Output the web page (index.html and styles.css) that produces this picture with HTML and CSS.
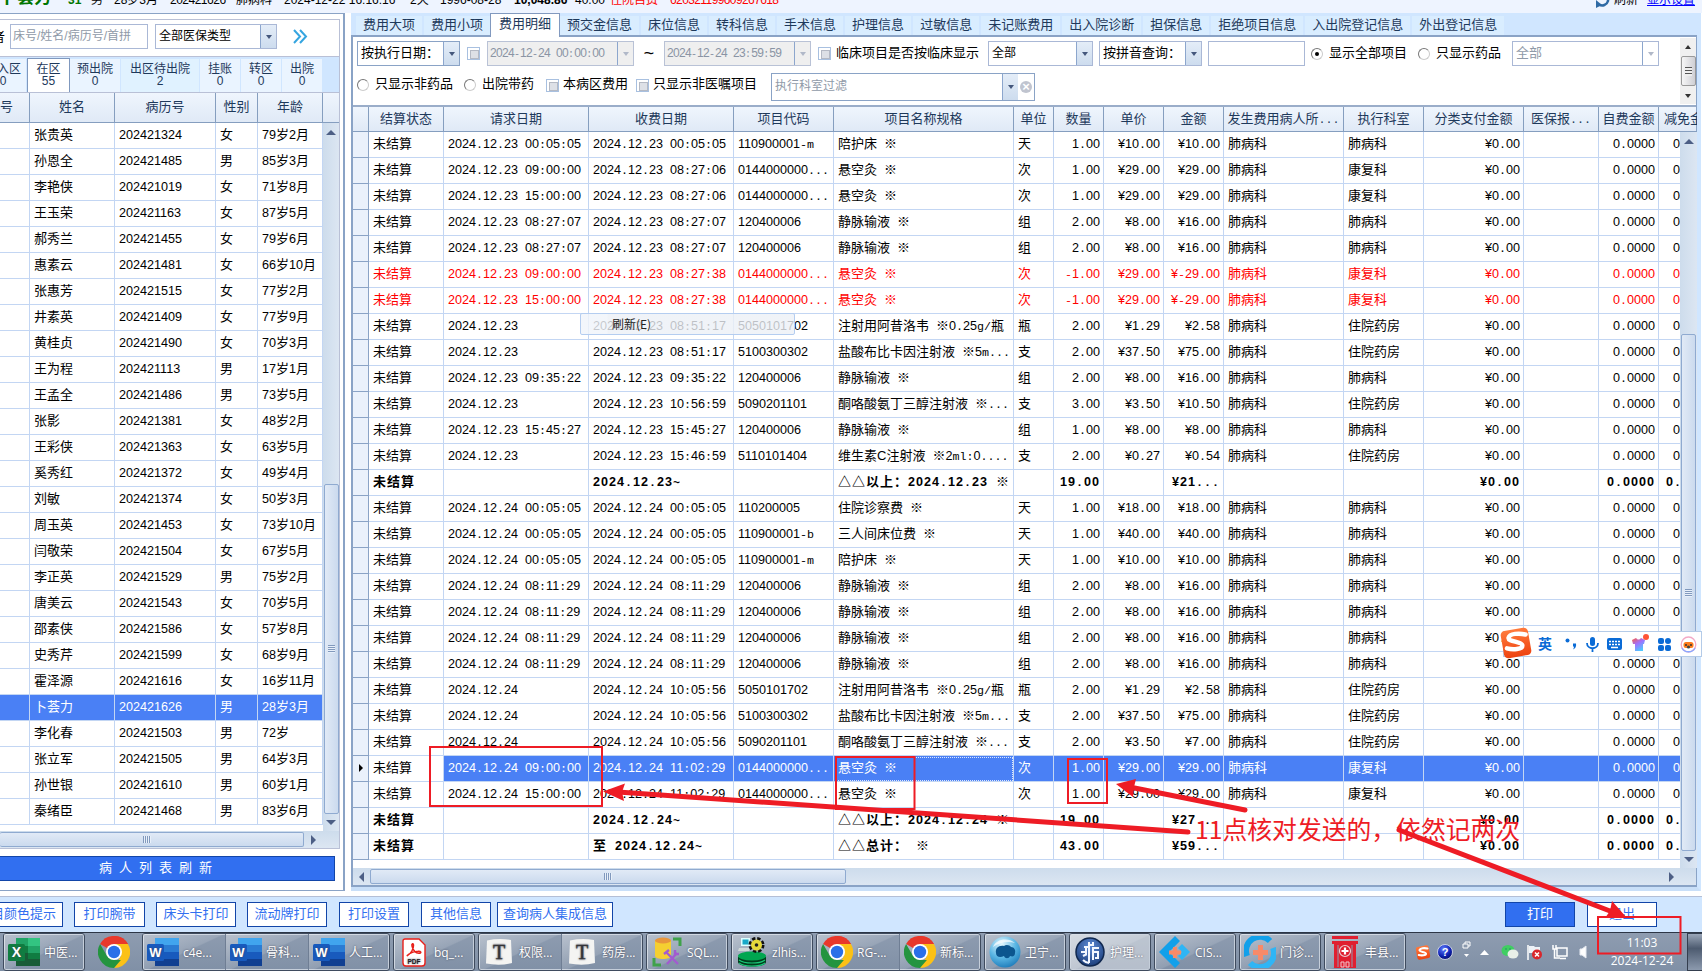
FILE: index.html
```html
<!DOCTYPE html>
<html lang="zh-CN">
<head>
<meta charset="utf-8">
<title>护理工作站</title>
<link rel="stylesheet" href="styles.css">
</head>
<body>
<svg class="defs" width="0" height="0">
  <defs>
    <linearGradient id="gs" x1="0" y1="0" x2="0" y2="1"><stop offset="0" stop-color="#ff7a3c"/><stop offset="1" stop-color="#ee4310"/></linearGradient>
    <linearGradient id="gshirt" x1="0" y1="0" x2="0.6" y2="1"><stop offset="0" stop-color="#ff5a3c"/><stop offset=".5" stop-color="#a070ff"/><stop offset="1" stop-color="#4fc8ff"/></linearGradient>
    <radialGradient id="gball" cx=".4" cy=".25" r=".8"><stop offset="0" stop-color="#e4f8ff"/><stop offset=".55" stop-color="#5ab6e4"/><stop offset="1" stop-color="#1b79b8"/></radialGradient>
    <radialGradient id="ghelp" cx=".4" cy=".3" r=".8"><stop offset="0" stop-color="#5f7cff"/><stop offset=".6" stop-color="#0c1fb0"/><stop offset="1" stop-color="#040a50"/></radialGradient>
    <radialGradient id="gnurse" cx=".5" cy=".3" r=".8"><stop offset="0" stop-color="#5d8ad4"/><stop offset="1" stop-color="#14356f"/></radialGradient>
    <symbol id="chrome" viewBox="0 0 32 32">
      <path d="M16 16 2.1 8A16 16 0 0 1 29.9 8z" fill="#e8382b"/><path d="M16 0A16 16 0 0 1 29.9 8H16z" fill="#e8382b"/>
      <path d="M29.9 8A16 16 0 0 1 16 32L22.9 20 16 8z" fill="#fbc116"/>
      <path d="M16 32A16 16 0 0 1 2.1 8L9 20 16 24h6.9z" fill="#24943f"/>
      <circle cx="16" cy="16" r="8" fill="#fff"/><circle cx="16" cy="16" r="6.2" fill="#2a6fe8"/>
    </symbol>
    <symbol id="word" viewBox="0 0 32 28">
      <path d="M8 0h24v7H8z" fill="#41a5ee"/><path d="M8 7h24v7H8z" fill="#2b7cd3"/><path d="M8 14h24v7H8z" fill="#185abd"/><path d="M8 21h24v7H8z" fill="#103f91"/>
      <rect y="6" width="17" height="17" rx="1.5" fill="#185abd"/>
      <text x="8.5" y="19" text-anchor="middle" font-family="Liberation Sans" font-weight="700" font-size="13" fill="#fff">W</text>
    </symbol>
    <symbol id="excel" viewBox="0 0 32 28">
      <path d="M8 0h12v8H8z" fill="#21a366"/><path d="M20 0h12v8H20z" fill="#33c481"/><path d="M8 8h12v7H8z" fill="#107c41"/><path d="M20 8h12v7H20z" fill="#21a366"/><path d="M8 15h24v13H8z" fill="#185c37"/><path d="M20 15h12v6H20z" fill="#107c41"/>
      <rect y="6" width="17" height="17" rx="1.5" fill="#107c41"/>
      <text x="8.5" y="19.200" text-anchor="middle" font-family="Liberation Sans" font-weight="700" font-size="14" fill="#fff">X</text>
    </symbol>
    <symbol id="pdf" viewBox="0 0 24 29">
      <path d="M3 1h14l6 6v18a3 3 0 0 1-3 3H4a3 3 0 0 1-3-3V3a2 2 0 0 1 2-2z" fill="#fff" stroke="#e8201a" stroke-width="1.4"/>
      <path d="M6 17c3-1.500 5.500-6 5.500-9.500 0-3-2.200-2-1.500.5 1 4 4 7 7 7.300 3 0 2-2.300-1-2-3 .2-7 1.300-9 2.700-2 1.400-2.300 2.300-1 1z" fill="none" stroke="#e8201a" stroke-width="1.500"/>
      <text x="12" y="25.500" text-anchor="middle" font-family="Liberation Sans" font-weight="700" font-size="6.500" fill="#222">PDF</text>
    </symbol>
    <symbol id="typora" viewBox="0 0 28 28">
      <path d="M2 2.500Q14 0 26 2l1 23q-12 3-26 .5z" fill="#f4f4f2"/>
      <text x="14" y="21" text-anchor="middle" font-family="Liberation Serif" font-size="20" fill="#333" stroke="#333" stroke-width=".3">T</text>
    </symbol>
    <symbol id="sql" viewBox="0 0 30 30">
      <path d="M3 3v16c0 4 16 4 16 0V3z" fill="#f5cf31"/><ellipse cx="11" cy="3.500" rx="8" ry="3" fill="#e8963c"/>
      <path d="M21 2h7v7" fill="none" stroke="#3fa24a" stroke-width="3"/><path d="M2 21v7h7" fill="none" stroke="#3fa24a" stroke-width="3"/>
      <path d="M14 15l12 12M25 16 15 27" stroke="#a25bd0" stroke-width="2.400"/><path d="M12 17l5-4M23 13l0 4 4 0" stroke="#a25bd0" stroke-width="2.400" fill="none"/>
    </symbol>
    <symbol id="zlhis" viewBox="0 0 30 30">
      <path d="M1 20v5c0 6 28 6 28 0v-5z" fill="#003c1c"/><ellipse cx="15" cy="19" rx="14" ry="4.500" fill="#00a650"/>
      <path d="M2 23c5 4 21 4 26 0M2 26c5 4 21 4 26 0" stroke="#19c878" fill="none" stroke-width="1.200"/>
      <rect x="4" y="1" width="9" height="8" fill="#dff"/><rect x="5.500" y="2.500" width="6" height="5" fill="#18a8c8"/><path d="M2 11h11l-1 3H1z" fill="#cfd8d8"/>
      <circle cx="19.500" cy="8" r="6" fill="none" stroke="#111" stroke-width="4" stroke-dasharray="3 1.700"/><circle cx="19.500" cy="8" r="5.500" fill="#e6da3a"/><circle cx="19.500" cy="8" r="1.800" fill="#222"/>
    </symbol>
    <symbol id="globe" viewBox="0 0 32 32">
      <circle cx="16" cy="16" r="15.500" fill="url(#gball)"/><path d="M7 17c-1-5 3-8 8-7 2-2 6-1 7 1 3 0 5 3 4 6 0 3-2 4-5 3-1 3-5 3-6 0-4 2-8 1-8-3z" fill="#0c568f"/><path d="M4 11c3-8 15-10 22-4-7-2-15-1-22 4z" fill="#fff" opacity=".7"/>
    </symbol>
    <symbol id="nurse" viewBox="0 0 30 30">
      <circle cx="15" cy="15" r="14" fill="url(#gnurse)" stroke="#10284f" stroke-width="1.500"/>
      <path d="M9 10h4M6 15h6M8 19l4-2M11 9v9M14 5v21M18 5v3h-3M17 11h7M18 11v12M18 15h5v6h-3M8 23c2 2 4 3 6 3" fill="none" stroke="#f2f7ff" stroke-width="2"/>
    </symbol>
    <symbol id="cis" viewBox="0 0 32 32">
      <path d="M16 0l5 5L10 16l11 11-5 5L0 16z" fill="#12a0ea"/><path d="M23 8l8 8-8 8-4-4 4-4-4-4z" fill="#2fb5f5"/><path d="M14 11h4v3.500h4v4h-4V22h-4v-3.500h-4v-4h4z" fill="#f88a68"/>
    </symbol>
    <symbol id="clinic" viewBox="0 0 32 32">
      <path d="M26 5A14 14 0 0 0 3 20" fill="none" stroke="#12a0ea" stroke-width="6"/><path d="M6 27A14 14 0 0 0 29 12" fill="none" stroke="#2fb5f5" stroke-width="6"/>
      <path d="M14 9h5v5h5v5h-5v5h-5v-5H9v-5h5z" fill="#f88a68"/>
    </symbol>
    <symbol id="building" viewBox="0 0 28 32">
      <path d="M1 0h26v3H1zM1 5h26v3H1z" fill="#e01f30"/><path d="M3 8h22v24H3z" fill="#e01f30"/><path d="M7 9v22M21 9v22" stroke="#8e9bb0" stroke-width="1"/>
      <circle cx="14" cy="15" r="5.500" fill="none" stroke="#e9d0d5" stroke-width="1.200"/><path d="M14 11.500v7M10.500 15h7" stroke="#fff" stroke-width="2.200"/>
      <path d="M10 26h3v5h-3zM15 26h3v5h-3z" fill="none" stroke="#f0c8cc" stroke-width="1"/>
    </symbol>
    <symbol id="sogou" viewBox="0 0 32 32">
      <rect x="3" y="3" width="26" height="26" rx="4" fill="url(#gs)" transform="rotate(-10 16 16)"/>
      <path d="M25 8c-6-1.500-15-1-16 3-.8 4 13 3.500 13 7.500 0 3.500-9 4-14.500 2.500" fill="none" stroke="#fff" stroke-width="4.200" stroke-linecap="round"/>
    </symbol>
  </defs>
</svg>

<div class="app">
  <header class="patient">
    <b class="p-name">卜荟力</b><b class="p-bed">31</b><span class="p-sex">男</span><span class="p-age">28岁3月</span><span class="p-no">202421626</span><span class="p-dept">肺病科</span><span class="p-in">2024-12-22 16:16:16</span><span class="p-day">2天</span><span class="p-birth">1996-08-28</span><b class="p-fee">10,048.86</b><span class="p-left">40.00</span><span class="p-type">住院自费</span><span class="p-id">620321199609267618</span>
    <svg class="p-icon" width="16" height="16" viewBox="0 0 16 16"><path d="M14 3v5a6 6 0 0 1-9 3.500" fill="none" stroke="#2f6aa5" stroke-width="2.500"/><path d="M2 7v8l6-3z" fill="#2f6aa5"/></svg>
    <span class="p-refresh">刷新</span><a class="p-link">显示设置</a>
  </header>

  <div class="work">
    <aside class="side">
      <div class="side-in">
        <div class="search">
          <span class="who">者</span>
          <div class="field ph">床号/姓名/病历号/首拼</div>
          <div class="combo ins-type"><span>全部医保类型</span><i class="dd"></i></div>
          <svg class="more" width="15" height="15" viewBox="0 0 15 15"><path d="M1 1l6 6.500L1 14M7 1l6 6.500L7 14" fill="none" stroke="#35a5e0" stroke-width="2"/></svg>
        </div>
        <nav class="zones" id="zones"></nav>
        <div class="plist">
          <div class="prow phead"><span>号</span><span>姓名</span><span>病历号</span><span>性别</span><span>年龄</span><span></span></div>
          <div class="pbody">
            <div class="prows" id="patients"></div>
            <div class="vbar"><i class="up"></i><div class="thumb side-thumb"><i class="grip"></i></div><i class="down"></i></div>
          </div>
          <div class="hbar side-h"><div class="hthumb"><i class="vgrip"></i></div><i class="right"></i></div>
        </div>
      </div>
      <div class="refresh-list">病人列表刷新</div>
    </aside>

    <main class="main">
      <nav class="tabs" id="tabs"></nav>
      <section class="panel">
        <div class="filters">
          <div class="frows">
          <div class="frow">
            <div class="combo w-date dark"><span>按执行日期：</span><i class="dd"></i></div>
            <i class="check m7"></i>
            <div class="combo w-time off m7"><span data-grid>2024-12-24 00:00:00</span><i class="dd"></i></div>
            <span class="tilde">~</span>
            <div class="combo w-time off"><span data-grid>2024-12-24 23:59:59</span><i class="dd"></i></div>
            <i class="check m7"></i><span class="lab l-clin">临床项目是否按临床显示</span>
            <div class="combo w-all"><span>全部</span><i class="dd"></i></div>
            <div class="combo w-py m6"><span>按拼音查询：</span><i class="dd"></i></div>
            <div class="combo w-in m6"></div>
            <i class="radio on m6"></i><span class="lab l-a">显示全部项目</span>
            <i class="radio"></i><span class="lab l-b">只显示药品</span>
            <div class="combo w-last"><span>全部</span><i class="dd"></i></div>
          </div>
          <div class="frow second">
            <i class="radio"></i><span class="lab l-c">只显示非药品</span>
            <i class="radio"></i><span class="lab l-d">出院带药</span>
            <i class="check"></i><span class="lab l-e">本病区费用</span>
            <i class="check"></i><span class="lab l-f">只显示非医嘱项目</span>
            <div class="combo w-room dark"><span>执行科室过滤</span><i class="dd"></i><i class="clear">×</i></div>
          </div>
          </div>
          <div class="oldbar"><i class="up"></i><div class="oldthumb"></div><i class="down"></i></div>
        </div>
        <div class="row head" id="head"></div>
        <div class="body">
          <div class="rows" id="rows"></div>
          <div class="vbar main-v"><i class="up"></i><div class="thumb main-thumb"><i class="grip"></i></div><i class="down"></i></div>
        </div>
        <div class="hbar main-h"><i class="left"></i><div class="hthumb"><i class="vgrip"></i></div><i class="right"></i></div>
      </section>
    </main>
  </div>

  <footer class="actions" id="actions"></footer>

  <div class="taskbar">
    <div class="tasks" id="tasks"></div>
    <div class="tray">
      <svg width="16" height="17" viewBox="0 0 32 32"><use href="#sogou"/></svg>
      <svg class="t-help" width="16" height="16" viewBox="0 0 16 16"><circle cx="8" cy="8" r="7.500" fill="url(#ghelp)" stroke="#e3e8f2" stroke-width=".8"/><text x="8" y="12" text-anchor="middle" font-family="Liberation Sans" font-weight="700" font-size="11" fill="#fff">?</text></svg>
      <svg class="t-win" width="9" height="18" viewBox="0 0 9 18"><path d="M3 3V1h5v4H6M1 3h5v4H1z" fill="none" stroke="#fff"/><path d="M2 13h5l-2.500 3z" fill="#fff"/></svg>
      <svg class="t-up" width="9" height="5" viewBox="0 0 9 5"><path d="M0 5l4.500-5L9 5z" fill="#fff"/></svg>
      <svg class="t-chat" width="18" height="14" viewBox="0 0 18 14"><ellipse cx="7" cy="5.500" rx="6.500" ry="5.500" fill="#3fce62"/><ellipse cx="12" cy="9" rx="5.500" ry="4.500" fill="#e8efe8"/><circle cx="5" cy="4" r=".8" fill="#286"/><circle cx="9" cy="4" r=".8" fill="#286"/></svg>
      <svg class="t-flag" width="17" height="16" viewBox="0 0 17 16"><path d="M2 1v15" stroke="#fff" stroke-width="1.500"/><path d="M3 2h5l1 1h5v7H9L8 9H3z" fill="#eef2f7"/><circle cx="11" cy="10.500" r="5" fill="#d9262c"/><path d="M9 8.500l4 4M13 8.500l-4 4" stroke="#fff" stroke-width="1.500"/></svg>
      <svg class="t-net" width="17" height="16" viewBox="0 0 17 16"><path d="M6 4h10v8H6zM9 14.500h6M2 1v4h3V1M3.500 5v9H9" fill="none" stroke="#fff" stroke-width="1.500"/></svg>
      <svg class="t-vol" width="9" height="14" viewBox="0 0 9 14"><path d="M1 4h2l4-3v12l-4-3H1z" fill="#fff" stroke="#e5e9f0"/></svg>
      <div class="clock"><span>11:03</span><span>2024-12-24</span></div>
    </div>
    <div class="desk"></div>
  </div>
</div>

<div class="ctx">刷新(E)</div>

<svg class="marks" width="1702" height="971" viewBox="0 0 1702 971">
  <g fill="none" stroke="#ee1c25" stroke-width="2"><rect x="430" y="747" width="172" height="59"/><rect x="836" y="757" width="78.500" height="52"/><rect x="1068" y="759" width="39" height="44"/><rect x="1598" y="917" width="82.500" height="36.500"/></g>
  <g stroke="#ee1c25" stroke-width="5" stroke-linecap="round" fill="#ee1c25">
    <path d="M618 792L1188 832M1132 787.500L1245 810M1399 830L1610 911"/>
  </g>
  <g fill="#ee1c25"><path d="M603 791.500l22-8-3 8.500 2 9zM1116 784l20-5-2 8-1 10zM1627 918l-15-17-2 10-5 7z"/></g>
</svg>
<div class="note">11点核对发送的，依然记两次</div>

<div class="ime">
  <svg class="ime-logo" width="34" height="34" viewBox="0 0 32 32"><use href="#sogou"/></svg>
  <b>英</b>
  <svg width="12" height="12" viewBox="0 0 12 12"><circle cx="2.500" cy="2.500" r="2" fill="#0a6bd6"/><path d="M8 5.500h3c.5 3-.5 5-3 6 1-1.500 1-2 .8-3H8z" fill="#0a6bd6"/></svg>
  <svg width="13" height="17" viewBox="0 0 13 17"><rect x="4" y="1" width="5" height="9" rx="2.500" fill="#0a6bd6"/><path d="M1 7c0 7 11 7 11 0M6.500 12v4" fill="none" stroke="#0a6bd6" stroke-width="1.800"/></svg>
  <svg width="15" height="12" viewBox="0 0 15 12"><rect width="15" height="12" rx="2" fill="#0a6bd6"/><path d="M2 3.500h11M2 6.500h11" stroke="#fff" stroke-width="1.600" stroke-dasharray="2 1"/><path d="M4 9.500h7" stroke="#fff" stroke-width="1.500"/></svg>
  <svg class="shirt" width="18" height="18" viewBox="0 0 18 18"><path d="M1 6l4-2c2 2 3 2 5 0l4 2-1 4h-1v7H4v-7H2z" fill="url(#gshirt)"/><circle cx="15" cy="3" r="3" fill="#ff5436"/></svg>
  <svg width="13" height="13" viewBox="0 0 13 13"><g fill="#0a6bd6"><rect width="6" height="6" rx="2"/><rect x="7" width="6" height="6" rx="3"/><rect y="7" width="6" height="6" rx="2"/><rect x="7" y="7" width="6" height="6" rx="2"/></g></svg>
  <svg width="17" height="17" viewBox="0 0 17 17"><ellipse cx="8.500" cy="8.500" rx="7.300" ry="7.500" fill="#fff" stroke="#f3a9c6" stroke-width="1.300"/><path d="M2 12c2 5 11 5 13 0" fill="none" stroke="#8aa8ff" stroke-width="1.300"/><rect x="3.500" y="6" width="10" height="6" rx="2.500" fill="#ff7a1a"/><circle cx="6" cy="9" r="1" fill="#333"/><circle cx="11" cy="9" r="1" fill="#333"/><circle cx="8.500" cy="11" r="1.600" fill="#444"/></svg>
</div>
<script src="app.js"></script>
</body>
</html>
```
FILE: styles.css
```css
* { box-sizing: border-box; }
body { margin: 0; width: 1702px; height: 971px; overflow: hidden; position: relative; font: 13px/15px "Liberation Sans", "Noto Sans CJK SC", sans-serif; color: #000; background: #fff; }
.defs { position: absolute; }
i { font-style: normal; }
.app { display: flex; flex-direction: column; height: 971px; }
.n { font-size: 12.6px; }
.p { font-family: "Liberation Mono", monospace; font-size: 11.67px; white-space: pre; }

.patient { height: 13px; flex: none; background: #eef4ff; display: flex; overflow: hidden; white-space: nowrap; font-size: 12px; line-height: 14px; }
.patient > * { flex: none; margin-top: -7px; }
.patient .p-name { width: 68px; font-size: 17px; color: #007500; line-height: 14px; margin-top: -9px; }
.p-bed { width: 23px; color: #007500; }
.p-sex { width: 23px; }
.p-age { width: 56px; }
.p-no { width: 66px; letter-spacing: -.5px; }
.p-dept { width: 48px; }
.p-in { width: 126px; }
.p-day { width: 30px; }
.p-birth { width: 74px; }
.p-fee { width: 61px; }
.p-left { width: 35px; }
.p-type { width: 60px; color: #f00; }
.p-id { width: 920px; color: #f00; letter-spacing: -.6px; }
.patient .p-icon { width: 24px; }
.p-refresh { width: 33px; }
.p-link { color: #00f; text-decoration: underline; }

.work { display: flex; height: 878px; background: #fff; }
.side { width: 345px; height: 878px; border: 1px solid #8aa3c6; border-width: 1px 2px 1px 0; display: flex; flex-direction: column; padding-top: 5px; }
.side-in { width: 340px; height: 830px; border: 1px solid #b9c0d6; border-left: 0; }
.search { height: 37px; display: flex; align-items: center; border-bottom: 1px solid #b9c0d6; overflow: hidden; padding-bottom: 3px; }
.who { width: 10px; text-indent: -8px; overflow: hidden; }
.field, .combo { border: 1px solid #aab8d6; background: #fff; height: 25px; display: flex; align-items: stretch; white-space: nowrap; line-height: 22px; }
.field { width: 138px; padding-left: 2px; margin-right: 7px; }
.ph { font-size: 12px; color: #8f9aa8; }
.ins-type { width: 122px; font-size: 12px; }
.more { margin-left: 16px; }
.combo span { flex: 1; padding-left: 3px; overflow: hidden; }
.combo span span { padding: 0; }
.dd { width: 16px; flex: none; border-left: 1px solid #8ca6cd; background: linear-gradient(#e4edf8, #cddcee); display: flex; align-items: center; justify-content: center; }
.dd::before { content: ""; border: 3.5px solid transparent; border-top: 4px solid #44577c; border-bottom: 0; }
.zones { height: 36px; background: #d0e6ff; display: flex; align-items: flex-end; font-size: 12px; line-height: 12px; text-align: center; color: #1e395b; border-bottom: 1px solid #b9c0d6; overflow: hidden; }
.zones div { height: 33px; flex: none; padding-top: 4px; background: #eaf4ff; margin-right: 1px; }
.zones .sel { height: 35px; border: 1px solid #7f98be; border-bottom: 0; background: #fff; margin: 0 0 -1px; padding-top: 4px; }
.zones .hot { background: #e0f2ff; }
.prow { display: grid; grid-template-columns: 30px 85px 101px 42px 65px; height: 26px; }
.prow > span { border-right: 1px solid #c3d6f3; border-bottom: 1px solid #c3d6f3; padding-left: 4px; line-height: 23px; white-space: nowrap; overflow: hidden; }
.phead { height: 30px; grid-template-columns: 30px 85px 101px 42px 65px 16px; background: linear-gradient(#eff5fd, #dfe9f6); }
.phead > span { border-right-color: #859ebf; border-bottom-color: #859ebf; color: #1e395b; text-align: center; line-height: 28px; padding: 0; }
.phead > span:first-child { text-align: left; }
.phead > span:last-child { border-right: 0; }
.pbody { display: flex; height: 708px; }
.prows { width: 323px; }
.prow.cur > span { background: #4a80f5; color: #fff; }
.vbar { width: 16px; background: linear-gradient(90deg, #cddcec, #dce6f2); display: flex; flex-direction: column; align-items: center; flex: none; }
.up, .down { width: 0; height: 0; flex: none; border: 5px solid transparent; }
.up { border-bottom: 5px solid #4d5f85; border-top: 0; margin-top: 7px; }
.down { border-top: 5px solid #4d5f85; border-bottom: 0; margin-top: 6px; }
.thumb { width: 15px; border: 1px solid #8faad0; border-radius: 2px; background: linear-gradient(90deg, #e1eaf6, #cbdaee); display: flex; align-items: center; justify-content: center; }
.side-thumb { height: 330px; margin-top: 349px; }
.grip { width: 7px; height: 8px; background: repeating-linear-gradient(#8199bd 0 1px, #e8f0fa 1px 2px); }
.vgrip { width: 8px; height: 7px; background: repeating-linear-gradient(90deg, #8199bd 0 1px, #e8f0fa 1px 2px); }
.hbar { height: 17px; background: linear-gradient(#cddcec, #dce6f2); display: flex; align-items: center; }
.hthumb { height: 15px; border: 1px solid #8faad0; border-radius: 2px; background: linear-gradient(#e1eaf6, #cbdaee); display: flex; align-items: center; justify-content: center; }
.side-h .hthumb { width: 304px; border-left: 0; padding-right: 10px; }
.left, .right { width: 0; height: 0; border: 5px solid transparent; }
.right { border-left: 5px solid #4d5f85; border-right: 0; margin-left: 7px; }
.left { border-right: 5px solid #4d5f85; border-left: 0; }
.refresh-list { margin-top: 7px; height: 25px; width: 335px; background: #316ff0; border: 1px solid #1245a8; border-left: 0; color: #fff; line-height: 22px; text-align: center; letter-spacing: 7px; padding-right: 16px; }

.main { width: 1350px; margin-left: 6px; height: 878px; display: flex; flex-direction: column; border-right: 4px solid #d0e6ff; border-bottom: 4px solid #c9dff8; background: #fff; }
.tabs { height: 22px; background: #d0e6ff; padding: 3px 0 0 5px; display: flex; gap: 2px; color: #1e395b; }
.tabs div { background: #d9edff; padding: 0 7px; line-height: 18px; white-space: nowrap; }
.tabs .sel { background: #fff; border: 1px solid #8199bf; border-bottom: 0; margin: -3px -2px -2px; padding: 0 8px; line-height: 20px; z-index: 1; height: 24px; }
.panel { border: 2px solid #8aa3c6; border-width: 2px 1px 2px 2px; height: 852px; }
.filters { height: 70px; border-bottom: 2px solid #9aadc9; display: flex; }
.frows { width: 1327px; }
.frow { display: flex; align-items: center; height: 25px; margin: 4px 0 0 4px; white-space: nowrap; }
.frow > * { flex: none; }
.frow .lab { margin-bottom: 2px; }
.frow.second { height: 28px; margin-top: 7px; }
.frow.second .lab { margin-bottom: 7px; }
.frow.second .check, .frow.second .radio { margin-bottom: 4px; }
.combo.dark { border-color: #8aa3c6; }
.w-date { width: 103px; }
.w-time { width: 147px; }
.w-all { width: 105px; font-size: 12px; }
.w-py { width: 103px; }
.w-in { width: 97px; }
.w-last { width: 147px; color: #8f9aa8; }
.w-last .dd, .off .dd { background: transparent; }
.w-last .dd::before, .off .dd::before { border-top-color: #b0b8c8; }
.combo.off { background: #efefef; color: #8a94a4; border-color: #b9c2d6; }
.combo.off > span { padding-left: 2px; }
.off .n { font-size: 12px; letter-spacing: -.67px; }
.off .p { font-size: 10px; }
.w-room { width: 264px; height: 28px; line-height: 25px; color: #8f9aa8; font-size: 12px; }
.clear { width: 12px; height: 12px; border-radius: 6px; margin: 7px 2px 0; background: #c0c4cf; color: #fff; line-height: 12px; text-align: center; font-size: 13px; font-weight: 700; }
.m6 { margin-left: 6px; }
.m7 { margin-left: 7px; }
.tilde { width: 30px; text-align: center; font: 18px/16px "Liberation Mono", monospace; }
.check { width: 13px; height: 13px; border: 1px solid #a8c0e0; background: #fff; padding: 2px; }
.check::before { content: ""; display: block; width: 7px; height: 7px; border: 1px solid #b4b9c4; background: #dde0e6; }
.radio { width: 12px; height: 12px; border: 1px solid #777; border-right-color: #ccc; border-bottom-color: #ccc; border-radius: 6px; background: #fff; padding: 3px; }
.radio.on::before { content: ""; display: block; width: 4px; height: 4px; border-radius: 2px; background: #000; }
.l-clin { width: 157px; padding-left: 5px; }
.l-a { width: 95px; padding-left: 6px; }
.l-b { width: 82px; padding-left: 6px; }
.l-c { width: 95px; padding-left: 6px; }
.l-d { width: 70px; padding-left: 6px; }
.l-e { width: 77px; padding-left: 4px; }
.l-f { width: 122px; padding-left: 4px; }
.oldbar { width: 16px; background: #f0f0f0; margin: 1px 0; display: flex; flex-direction: column; align-items: center; }
.oldbar .up, .oldbar .down { border-width: 3.5px; border-top-color: transparent; border-bottom-color: transparent; }
.oldbar .up { border-bottom: 4px solid #333; border-top: 0; margin-top: 7px; }
.oldbar .down { border-top: 4px solid #333; border-bottom: 0; margin-top: 8px; }
.oldthumb { width: 15px; height: 30px; margin-top: 7px; border: 1px solid #999; border-radius: 2px; background: repeating-linear-gradient(#555 0 1px, #eee 1px 3px) center / 7px 9px no-repeat, linear-gradient(90deg, #f6f6f6, #cfcfd4); }

.row { display: grid; grid-template-columns: 16px 75px 145px 145px 100px 180px 40px 50px 60px 60px 120px 80px 100px 75px 60px 22px; height: 26px; }
.row > span { border-right: 1px solid #c3d6f3; border-bottom: 1px solid #c3d6f3; padding: 0 4px; line-height: 24px; white-space: nowrap; overflow: hidden; }
.row > span.r { text-align: right; padding: 0 3px; }
.row > span:first-child { background: #eaf1fb; border-color: #8aa3c6; padding: 8px 0 0 6px; }
.row > span:last-child { border-right: 0; padding: 0 0 0 14px; }
.row.head { height: 25px; background: linear-gradient(#eff5fd, #dfe9f6); grid-template-columns: 16px 75px 145px 145px 100px 180px 40px 50px 60px 60px 120px 80px 100px 75px 60px 38px; color: #1e395b; }
.row.head > span { border-color: #859ebf; text-align: center; padding: 0; line-height: 23px; }
.row.head > span:first-child { background: none; }
.row.head > span:last-child { text-align: left; padding-left: 5px; }
.row.red { color: #f00; }
.row.bold { font-weight: 700; letter-spacing: 1px; }
.row.bold > span:last-child { padding-left: 7px; }
.row.cur > span:nth-child(n+3) { background: #4a80f5; color: #fff; }
.row.cur > span:nth-child(6) { outline: 1px dotted #dbe7ff; outline-offset: -2px; }
.ptr { display: block; width: 0; height: 0; border: 4px solid transparent; border-left: 4px solid #000; border-right: 0; }
.body { display: flex; height: 736px; }
.rows { width: 1327px; }
.main-v { width: 17px; }
.main-thumb { height: 517px; margin-top: 190px; }
.main-h { padding-left: 6px; }
.main-h .hthumb { width: 476px; margin-left: 6px; }
.main-h .right { margin-left: 823px; }

.actions { height: 36px; margin-top: 5px; flex: none; background: #d0e6ff; border-top: 1px solid #b4bfd6; display: flex; padding-top: 5px; }
.btn { height: 25px; border: 1px solid #1245a8; background: #fff; color: #316ff0; line-height: 22px; text-align: center; white-space: nowrap; flex: none; }
.btn.fill { background: #316ff0; color: #fff; }

.taskbar { height: 39px; flex: none; border-top: 1px solid #2c3646; background: linear-gradient(#8e9cb0, #8090a6); display: flex; }
.tasks { width: 1410px; display: flex; padding-left: 3px; gap: 3px; }
.group { display: flex; border: 1px solid #3f4b5e; border-radius: 3px; box-shadow: inset 0 0 0 1px #c5ceda; }
.group.lone { border-color: transparent; box-shadow: none; width: 51px; }
.task { width: 82px; display: flex; align-items: center; padding: 0 0 0 4px; color: #fff; font: 12px "Open Sans", "Noto Sans CJK SC", sans-serif; white-space: nowrap; background: linear-gradient(155deg, rgba(255,255,255,.38), rgba(255,255,255,.12) 50%, rgba(255,255,255,0) 52%); text-shadow: 0 0 2px #445; }
.task + .task { border-left: 1px solid #6f7e94; width: 83px; }
.group .task:last-child { margin-right: -2px; }
.task svg { flex: none; margin-right: 4px; }
.lone .task { background: none; padding-left: 9px; }
.active { background: rgba(255,255,255,.42); }
.tray { width: 277px; display: flex; align-items: center; padding-left: 5px; }
.tray > svg { flex: none; }
.t-help { margin-left: 6px; }
.t-win { margin-left: 9px; margin-bottom: 5px; }
.t-up { margin-left: 9px; }
.t-chat { margin-left: 12px; }
.t-flag { margin-left: 7px; }
.t-net { margin-left: 8px; }
.t-vol { margin-left: 11px; }
.clock { width: 100px; margin-left: 9px; color: #fff; text-align: center; font: 12px/18px "Open Sans", sans-serif; display: flex; flex-direction: column; }
.desk { width: 15px; border: 1px solid #343e4e; border-right: 0; background: linear-gradient(#9aa6b8, #4d5b70 40%, #8c9aae); }

.ctx { position: absolute; left: 580px; top: 313px; width: 215px; height: 22px; border: 1px solid #b4cdf0; border-radius: 2px; background: linear-gradient(90deg, rgba(240,244,250,.82) 26px, rgba(236,240,246,.8) 27px); font: 12px/19px "Noto Sans CJK SC", sans-serif; padding-left: 31px; color: #222; }
.marks { position: absolute; left: 0; top: 0; }
.note { position: absolute; left: 1195px; top: 810px; font: 24.8px/36px "Noto Sans CJK SC", sans-serif; color: #ee1c25; white-space: nowrap; }
.ime { position: absolute; left: 1503px; top: 631px; width: 199px; height: 26px; border: 1px solid #b4cbe8; background: #fff; display: flex; align-items: center; justify-content: space-between; padding: 0 4px 0 34px; }
.ime-logo { position: absolute; left: -5px; top: -6px; }
.ime b { color: #0a6bd6; font-size: 14px; margin-right: 4px; }
.shirt { margin-bottom: 3px; }
```
FILE: app.js
```js
const $ = id => document.getElementById(id);

// Latin characters sit on a fixed 7px grid; digits use the sans face, the rest the mono face.
const grid = s => s
  .replace(/[0-9¥]+|[\x20-\x2f\x3a-\x7e]+/g, m =>
    /^[A-Z]$/.test(m) ? m : `<span class="${/[0-9¥]/.test(m) ? 'n' : 'p'}">${m}</span>`);

document.querySelectorAll('[data-grid]').forEach(e => { e.innerHTML = grid(e.textContent); });

$('zones').innerHTML = [
  ['待入区', 0, 26, ''], ['在区', 55, 43, 'sel'], ['预出院', 0, 50, ''], ['出区待出院', 2, 78, 'hot'],
  ['挂账', 0, 40, ''], ['转区', 0, 40, ''], ['出院', 0, 40, '']
].map(([t, n, w, c], i) => `<div class="${c}" style="width:${w}px">${i ? t : '<span style="margin-left:-8px">入区</span>'}<br>${i ? n : `<span style="margin-left:-20px">${n}</span>`}</div>`).join('');

const patients = `张贵英 202421324 女 79岁2月
孙恩全 202421485 男 85岁3月
李艳侠 202421019 女 71岁8月
王玉荣 202421163 女 87岁5月
郝秀兰 202421455 女 79岁6月
惠素云 202421481 女 66岁10月
张惠芳 202421515 女 77岁2月
井素英 202421409 女 77岁9月
黄桂贞 202421490 女 70岁3月
王为程 202421113 男 17岁1月
王孟全 202421486 男 73岁5月
张影 202421381 女 48岁2月
王彩侠 202421363 女 63岁5月
奚秀红 202421372 女 49岁4月
刘敏 202421374 女 50岁3月
周玉英 202421453 女 73岁10月
闫敬荣 202421504 女 67岁5月
李正英 202421529 男 75岁2月
唐美云 202421543 女 70岁5月
邵素侠 202421586 女 57岁8月
史秀芹 202421599 女 68岁9月
霍泽源 202421616 女 16岁11月
卜荟力 202421626 男 28岁3月
李化春 202421503 男 72岁
张立军 202421505 男 64岁3月
孙世银 202421610 男 60岁1月
秦绪臣 202421468 男 83岁6月`.split('\n');
$('patients').innerHTML = patients.map(l => {
  const f = l.split(' ');
  return `<div class="prow ${f[0] === '卜荟力' ? 'cur' : ''}"><span></span>${f.map(x => `<span>${grid(x)}</span>`).join('')}</div>`;
}).join('');

$('tabs').innerHTML = '费用大项 费用小项 费用明细 预交金信息 床位信息 转科信息 手术信息 护理信息 过敏信息 未记账费用 出入院诊断 担保信息 拒绝项目信息 入出院登记信息 外出登记信息'
  .split(' ').map(t => `<div class="${t === '费用明细' ? 'sel' : ''}">${t}</div>`).join('');

$('head').innerHTML = ['', '结算状态', '请求日期', '收费日期', '项目代码', '项目名称规格', '单位', '数量', '单价', '金额', '发生费用病人所...', '执行科室', '分类支付金额', '医保报...', '自费金额', '减免金额']
  .map(t => `<span>${grid(t)}</span>`).join('');

// request time | charge time | code | name | unit | qty | price | amount | department
const D3 = '2024.12.23', D4 = '2024.12.24';
const F = '肺病科', K = '康复科', Y = '住院药房';
const J = '静脉输液 ※', X = '悬空灸 ※';
const data = [
  [D3 + ' 00:05:05', D3 + ' 00:05:05', '110900001-m', '陪护床 ※', '天', '1.00', '10.00', '10.00', F],
  [D3 + ' 09:00:00', D3 + ' 08:27:06', '0144000000...', X, '次', '1.00', '29.00', '29.00', K],
  [D3 + ' 15:00:00', D3 + ' 08:27:06', '0144000000...', X, '次', '1.00', '29.00', '29.00', K],
  [D3 + ' 08:27:07', D3 + ' 08:27:07', '120400006', J, '组', '2.00', '8.00', '16.00', F],
  [D3 + ' 08:27:07', D3 + ' 08:27:07', '120400006', J, '组', '2.00', '8.00', '16.00', F],
  [D3 + ' 09:00:00', D3 + ' 08:27:38', '0144000000...', X, '次', '-1.00', '29.00', '-29.00', K],
  [D3 + ' 15:00:00', D3 + ' 08:27:38', '0144000000...', X, '次', '-1.00', '29.00', '-29.00', K],
  [D3, D3 + ' 08:51:17', '5050101702', '注射用阿昔洛韦 ※0.25g/瓶', '瓶', '2.00', '1.29', '2.58', Y],
  [D3, D3 + ' 08:51:17', '5100300302', '盐酸布比卡因注射液 ※5m...', '支', '2.00', '37.50', '75.00', Y],
  [D3 + ' 09:35:22', D3 + ' 09:35:22', '120400006', J, '组', '2.00', '8.00', '16.00', F],
  [D3, D3 + ' 10:56:59', '5090201101', '酮咯酸氨丁三醇注射液 ※...', '支', '3.00', '3.50', '10.50', Y],
  [D3 + ' 15:45:27', D3 + ' 15:45:27', '120400006', J, '组', '1.00', '8.00', '8.00', F],
  [D3, D3 + ' 15:46:59', '5110101404', '维生素C注射液 ※2ml:0....', '支', '2.00', '0.27', '0.54', Y],
  { date: D3 + '~', name: '△△以上：2024.12.23 ※', qty: '19.00', sum: '¥21...' },
  [D4 + ' 00:05:05', D4 + ' 00:05:05', '110200005', '住院诊察费 ※', '天', '1.00', '18.00', '18.00', F],
  [D4 + ' 00:05:05', D4 + ' 00:05:05', '110900001-b', '三人间床位费 ※', '天', '1.00', '40.00', '40.00', F],
  [D4 + ' 00:05:05', D4 + ' 00:05:05', '110900001-m', '陪护床 ※', '天', '1.00', '10.00', '10.00', F],
  ...Array.from({ length: 4 }, () => [D4 + ' 08:11:29', D4 + ' 08:11:29', '120400006', J, '组', '2.00', '8.00', '16.00', F]),
  [D4, D4 + ' 10:05:56', '5050101702', '注射用阿昔洛韦 ※0.25g/瓶', '瓶', '2.00', '1.29', '2.58', Y],
  [D4, D4 + ' 10:05:56', '5100300302', '盐酸布比卡因注射液 ※5m...', '支', '2.00', '37.50', '75.00', Y],
  [D4, D4 + ' 10:05:56', '5090201101', '酮咯酸氨丁三醇注射液 ※...', '支', '2.00', '3.50', '7.00', Y],
  [D4 + ' 09:00:00', D4 + ' 11:02:29', '0144000000...', X, '次', '1.00', '29.00', '29.00', K],
  [D4 + ' 15:00:00', D4 + ' 11:02:29', '0144000000...', X, '次', '1.00', '29.00', '29.00', K],
  { date: D4 + '~', name: '△△以上：2024.12.24 ※', qty: '19.00', sum: '¥27...' },
  { date: '至 ' + D4 + '~', name: '△△总计： ※', qty: '43.00', sum: '¥59...' }
];
const right = new Set([7, 8, 9, 12, 14]);
$('rows').innerHTML = data.map((d, i) => {
  const total = !Array.isArray(d);
  const cells = total
    ? ['', '未结算', '', d.date, '', d.name, '', d.qty, '', d.sum, '', '', '¥0.00', '', '0.0000', '0.']
    : ['', '未结算', ...d.slice(0, 6), '¥' + d[6], '¥' + d[7], F, d[8], '¥0.00', '', '0.0000', '0'];
  const cls = total ? 'bold' : d[5][0] === '-' ? 'red' : i === 24 ? 'cur' : '';
  return `<div class="row ${cls}">${cells.map((c, k) =>
    `<span class="${right.has(k) ? 'r' : ''}">${i === 24 && !k ? '<i class="ptr"></i>' : grid(c)}</span>`).join('')}</div>`;
}).join('');

$('actions').innerHTML = [
  ['项目颜色提示', 0, 63, ''], ['打印腕带', 11, 71, ''], ['床头卡打印', 11, 80, ''], ['流动牌打印', 11, 80, ''],
  ['打印设置', 12, 70, ''], ['其他信息', 12, 70, ''], ['查询病人集成信息', 6, 116, ''], ['打印', 892, 70, 'fill'], ['退出', 12, 70, '']
].map(([t, m, w, c], i) => `<div class="btn ${c}" style="margin-left:${m}px;width:${w}px${i ? '' : ';direction:rtl;padding-right:6px;border-left:0'}">${t}</div>`).join('');

const icon = (n, w = 32, h = 32) => `<svg width="${w}" height="${h}"><use href="#${n}"/></svg>`;
$('tasks').innerHTML = [
  [['excel', 32, 28, '中医...']],
  [['chrome', 32, 32, '']],
  [['word', 32, 28, 'c4e...'], ['word', 32, 28, '骨科...'], ['word', 32, 28, '人工...']],
  [['pdf', 32, 29, 'bq_...']],
  [['typora', 32, 28, '权限...'], ['typora', 32, 28, '药房...']],
  [['sql', 32, 30, 'SQL...']],
  [['zlhis', 32, 30, 'zlhis...']],
  [['chrome', 32, 32, 'RG-...'], ['chrome', 32, 32, '新标...']],
  [['globe', 32, 32, '卫宁...']],
  [['nurse', 32, 30, '护理...']],
  [['cis', 32, 32, 'CIS...']],
  [['clinic', 32, 32, '门诊...']],
  [['building', 32, 32, '丰县...']]
].map(g => `<div class="group ${g[0][3] ? '' : 'lone'} ${g[0][0] === 'nurse' ? 'active' : ''}">${g.map(t =>
  `<div class="task">${icon(t[0], t[1], t[2])}${t[3]}</div>`).join('')}</div>`).join('');
```
